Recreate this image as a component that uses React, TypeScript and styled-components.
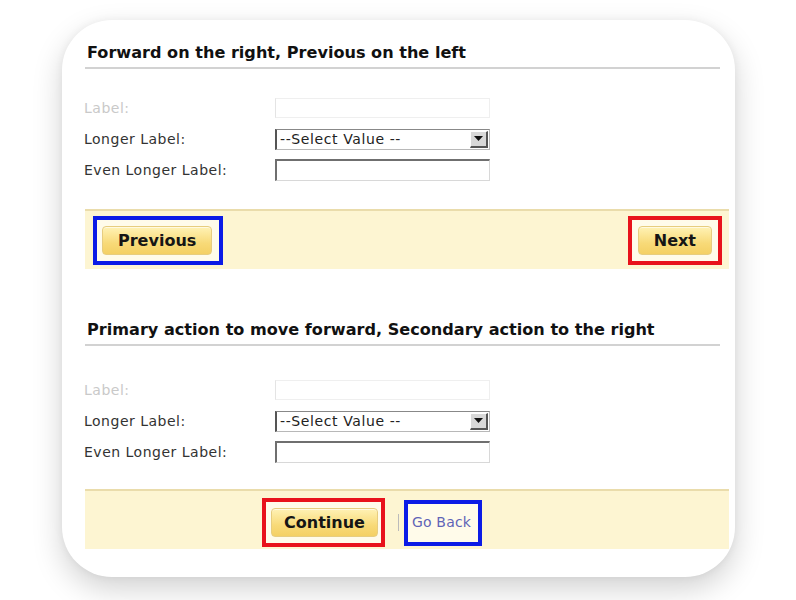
import styled, { createGlobalStyle } from 'styled-components';

const Global = createGlobalStyle`
  html, body {
    margin: 0;
    background: #ffffff;
    font-family: "DejaVu Sans", Verdana, sans-serif;
  }
`;

const Page = styled.div`
  width: 796px;
  height: 600px;
  padding: 20px 0 0 62px;
  box-sizing: border-box;
  overflow: hidden;
`;

const Card = styled.div`
  width: 673px;
  height: 557px;
  box-sizing: border-box;
  padding: 22px 6px 0 23px;
  background: #fff;
  border-radius: 50px;
  box-shadow: 0 12px 30px rgba(0, 0, 0, 0.18), 0 0 8px rgba(0, 0, 0, 0.05);
`;

const Section = styled.section<{ $top?: number }>`
  margin-top: ${(p) => p.$top ?? 0}px;
`;

const Heading = styled.h2`
  margin: 0 9px 0 0;
  padding: 0 0 4px 2px;
  font-size: 16.1px;
  line-height: 21px;
  font-weight: bold;
  color: #111;
  border-bottom: 2px solid #d2d2d2;
`;

const Form = styled.div<{ $top: number }>`
  margin-top: ${(p) => p.$top}px;
  display: flex;
  flex-direction: column;
  gap: 9px;
`;

const Row = styled.div`
  display: flex;
  align-items: center;
  height: 22px;
`;

const Label = styled.span<{ $muted?: boolean }>`
  width: 191px;
  margin-left: -1px;
  font-size: 14px;
  letter-spacing: 0.5px;
  color: ${(p) => (p.$muted ? '#c9c9c9' : '#333')};
`;

const TextBox = styled.div<{ $muted?: boolean }>`
  width: 215px;
  height: ${(p) => (p.$muted ? 20 : 22)}px;
  box-sizing: border-box;
  background: #fff;
  border: 1px solid ${(p) => (p.$muted ? '#efefef' : '#d8d8d8')};
  border-top: ${(p) => (p.$muted ? '1px solid #efefef' : '2px solid #6f6f6f')};
  border-left: ${(p) => (p.$muted ? '1px solid #e4e4e4' : '2px solid #6f6f6f')};
`;

const Select = styled.div`
  width: 215px;
  height: 21px;
  box-sizing: border-box;
  display: flex;
  align-items: center;
  justify-content: space-between;
  border: 1px solid #b8b8b8;
  border-left: 2px solid #555;
  border-top: 1px solid #888;
  font-size: 14px;
  letter-spacing: 0.6px;
  color: #222;
  padding-left: 3px;
  background: #fff;
`;

const Arrow = styled.span`
  width: 18px;
  height: 17px;
  margin-right: 1px;
  box-sizing: border-box;
  background: #d8d8d8;
  border: 1px solid #fff;
  border-right: 2px solid #555;
  border-bottom: 2px solid #555;
  display: flex;
  align-items: center;
  justify-content: center;
`;

const Bar = styled.div<{ $top: number; $start?: boolean }>`
  margin-top: ${(p) => p.$top}px;
  height: 60px;
  box-sizing: border-box;
  background: #fdf5d2;
  border-top: 2px solid #eadcab;
  display: flex;
  align-items: center;
  justify-content: ${(p) => (p.$start ? 'flex-start' : 'space-between')};
  padding: 0 7px 0 ${(p) => (p.$start ? 177 : 8)}px;
`;

const Outline = styled.div<{ $color: string; $pad?: string; $shift?: number }>`
  display: flex;
  align-items: center;
  padding: ${(p) => p.$pad ?? '6px 5px'};
  margin-top: ${(p) => p.$shift ?? 0}px;
  border: 4px solid ${(p) => p.$color};
  background: #fffbea;
`;

const Button = styled.button<{ $wide?: boolean }>`
  height: 29px;
  padding: 0 ${(p) => (p.$wide ? 15 : 12)}px;
  font-family: "DejaVu Sans", Verdana, sans-serif;
  font-size: 16px;
  font-weight: bold;
  color: #151515;
  background: linear-gradient(#fff2b5, #f8da78 60%, #f4d064);
  border: 1px solid #e7cd7f;
  border-radius: 4px;
  box-shadow: inset 0 1px 0 rgba(255, 255, 255, 0.6);
`;

const Sep = styled.span`
  margin: 4px 5px 0 13px;
  width: 1px;
  height: 17px;
  background: #bbb;
`;

const Link = styled.a`
  font-size: 14px;
  letter-spacing: 0.2px;
  line-height: 17px;
  color: #5f64b7;
  text-decoration: none;
`;

function Fields({ top }: { top: number }) {
  return (
    <Form $top={top}>
      <Row>
        <Label $muted>Label:</Label>
        <TextBox $muted />
      </Row>
      <Row>
        <Label>Longer Label:</Label>
        <Select>
          <span>--Select Value --</span>
          <Arrow>
            <svg width="9" height="5" viewBox="0 0 9 5">
              <path d="M0 0h9L4.5 5z" fill="#111" />
            </svg>
          </Arrow>
        </Select>
      </Row>
      <Row>
        <Label>Even Longer Label:</Label>
        <TextBox />
      </Row>
    </Form>
  );
}

export default function App() {
  return (
    <>
      <Global />
      <Page>
        <Card>
          <Section>
            <Heading>Forward on the right, Previous on the left</Heading>
            <Fields top={28} />
            <Bar $top={28}>
              <Outline $color="#0b1be6" $pad="6px 7px 6px 5px">
                <Button $wide>Previous</Button>
              </Outline>
              <Outline $color="#e8121c" $pad="6px 6px">
                <Button $wide>Next</Button>
              </Outline>
            </Bar>
          </Section>
          <Section $top={50}>
            <Heading>Primary action to move forward, Secondary action to the right</Heading>
            <Fields top={33} />
            <Bar $top={26} $start>
              <Outline $color="#e8121c" $pad="6px 3px 6px 5px" $shift={4}>
                <Button>Continue</Button>
              </Outline>
              <Sep />
              <Outline $color="#0b1be6" $pad="10px 7px 11px 4px" $shift={6}>
                <Link href="#">Go Back</Link>
              </Outline>
            </Bar>
          </Section>
        </Card>
      </Page>
    </>
  );
}
